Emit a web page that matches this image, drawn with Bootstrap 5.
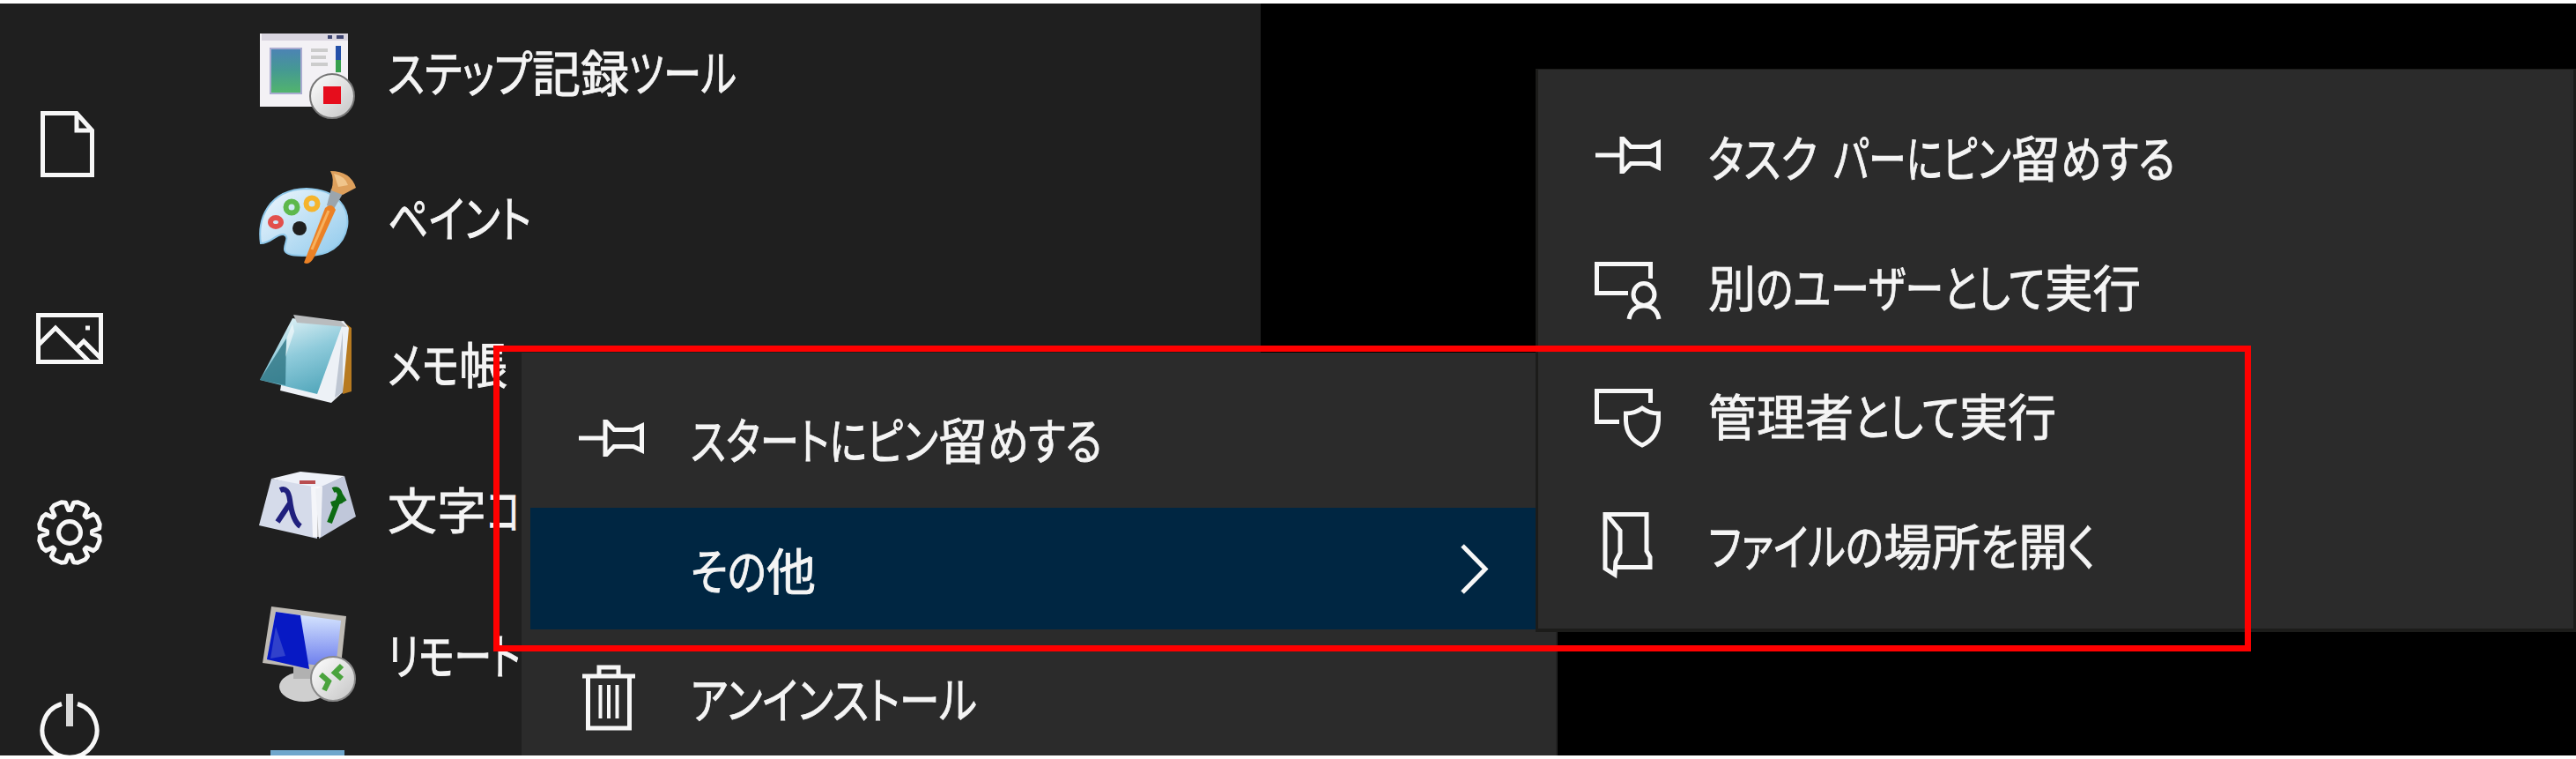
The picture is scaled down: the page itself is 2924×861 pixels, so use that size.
<!DOCTYPE html>
<html lang="ja">
<head>
<meta charset="utf-8">
<title>スタート メニュー</title>
<link href="https://cdn.jsdelivr.net/npm/bootstrap@5.3.0/dist/css/bootstrap.min.css" rel="stylesheet">
<style>
body{margin:0;background:#fff;overflow:hidden;font-family:"Noto Sans CJK JP","Noto Sans",sans-serif}
.screen{height:861px;padding:4px 0;background:#fff}
.desktop{height:853px;background:#000}
.start-panel{width:1431px;background:#1f1f1f}
.rail{width:288px;padding-top:50px}
.rail svg{width:120px;height:220px;margin-left:19px;flex:none}
.rail svg,.glyph{fill:none;stroke:#f7f7f7;stroke-width:5}
.app-row{height:165.3px;flex:none}
.apps{margin-top:-3.5px}
.app-icon{width:120px;height:120px;margin-right:32px;flex:none}
.label-text{font-size:56px;line-height:70px;height:70px;color:#f4f4f4;-webkit-text-stroke:.9px #f4f4f4;white-space:pre;font-feature-settings:"palt";margin-top:-6px;display:block}
.label-text b{font-weight:400;display:inline-block;transform-origin:0 50%}
.flyout{background:#2b2b2b;z-index:2}
.context{left:592px;top:396px;width:1176px;height:457px;padding:26px 0 0 10px;overflow:hidden;border-right:2px solid #222}
.context .r1{height:150px}
.context .r1 .label-text{margin-top:-8px}
.context .r2{height:138px;background:#002642;padding-top:5px}
.context .r3{height:160px}
.submenu{left:1743px;top:74px;width:1181px;height:639px;padding-top:27.6px;border:2px solid #1c1c1a;border-width:1px 3px 4px 3px;z-index:3}
.submenu .item{height:146.7px}
.glyph{width:90px;height:100px;flex:none}
.context .glyph{margin-left:48px;margin-right:44px}
.context .glyph.chev{margin:0 32px 0 auto}
.submenu .glyph{margin-left:58px;margin-right:45px}
.marker{left:560px;top:388px;width:1995px;height:347px;border:7px solid #f00;z-index:5}
</style>
<script src="https://cdn.jsdelivr.net/npm/bootstrap@5.3.0/dist/js/bootstrap.bundle.min.js"></script>
</head>
<body>
<div class="screen">
<main class="desktop position-relative overflow-hidden">
  <section class="start-panel d-flex h-100 overflow-hidden">
    <nav class="rail d-flex flex-column">
      <svg viewBox="19 54 120 220"><path d="M48.500 128.500H87L104.500 148V198.500H48.500ZM87 128.500V148H104.500"/></svg>
      <svg viewBox="19 274 120 220"><path d="M43.500 357.500H114.500V410.500H43.500ZM44 391L63 372L101 410M86 396L95 387L114 406"/><path d="M97 372h5" /></svg>
      <svg viewBox="19 494 120 220"><path id="gear" stroke-linejoin="round"/><circle cx="79" cy="604" r="12.500"/></svg>
      <svg viewBox="19 714 120 220"><path stroke-width="8" stroke="#d8d8d8" d="M79 787V824"/><path d="M70 798.500A31 31 0 1 0 88 798.500"/></svg>
    </nav>
    <div class="apps d-flex flex-column">
      <div class="app-row d-flex align-items-center">
        <svg class="app-icon" viewBox="288 23 120 120">
          <defs><linearGradient id="scr" x2="0" y2="1"><stop stop-color="#4c83b5"/><stop offset=".5" stop-color="#459a91"/><stop offset="1" stop-color="#52b56b"/></linearGradient>
          <linearGradient id="ball" x2="1" y2="1"><stop stop-color="#fff"/><stop offset="1" stop-color="#c4c4c4"/></linearGradient></defs>
          <path fill="#f3f1f5" d="M295 38H395V121H295Z"/><path fill="#d9d5df" d="M297 38H395V46H297Z"/>
          <path fill="#3d4470" d="M372 40h5v4h-5zM382 40h8v4h-8z"/>
          <path fill="url(#scr)" stroke="#a9abd0" stroke-width="2" d="M307 55H342V106H307Z"/>
          <path stroke="#ccc" stroke-width="4" d="M353 57H372M353 65H370M353 73H372"/>
          <path fill="#2450a8" d="M381 52h6v16h-6z"/><path fill="#37a04e" d="M381 68h6v14h-6z"/>
          <circle cx="377" cy="109" r="25" fill="url(#ball)" stroke="#777" stroke-width="2"/>
          <path fill="#e60d1c" d="M367 98h20v20h-20z"/>
        </svg>
        <span class="label-text"><b data-w="164">ステップ</b><b data-w="110">記録</b><b data-w="122">ツール</b></span>
      </div>
      <div class="app-row d-flex align-items-center">
        <svg class="app-icon" viewBox="288 189 120 120">
          <defs><linearGradient id="pal" x2="1" y2="1"><stop stop-color="#f2f8fd"/><stop offset="1" stop-color="#8ec9ec"/></linearGradient></defs>
          <path fill="url(#pal)" stroke="#8fc8ea" stroke-width="2" d="M296 277C292 250 304 216 348 215C384 216 397 238 394 258C390 281 372 291 349 291C336 291 322 291 323 283C323 276 329 270 322 267C313 266 308 277 296 277Z"/>
          <circle cx="340" cy="260" r="8" fill="#1f1f1f"/>
          <g fill="none" stroke-width="6"><ellipse cx="313" cy="253" rx="6" ry="5" stroke="#e2504c"/><circle cx="331" cy="236" r="6.500" stroke="#5db84c"/><circle cx="354" cy="232" r="6.500" stroke="#f5b42c"/></g>
          <path fill="#9ba5ad" d="M376 215L389 221L379 238L371 234Z"/>
          <path fill="#eb8125" d="M369 237Q376 230 381 239L357 292Q351 303 345 299Z"/><path stroke="#f7b15d" stroke-width="3" d="M373 240L354 284"/>
          <path fill="#dea05c" d="M375 195Q398 195 404 214L389 222L376 217Q380 204 375 195Z"/><path fill="#f0c58c" d="M379 198Q392 201 395 211L384 213Z"/>
        </svg>
        <span class="label-text"><b data-w="163">ペイント</b></span>
      </div>
      <div class="app-row d-flex align-items-center">
        <svg class="app-icon" viewBox="288 354 120 120">
          <defs><linearGradient id="note" x1=".2" x2=".6" y2="1"><stop stop-color="#e4f3f7"/><stop offset=".5" stop-color="#8fcbdb"/><stop offset="1" stop-color="#56a9bd"/></linearGradient></defs>
          <path fill="#b77a20" d="M392 367L399 372V444L389 447Z"/>
          <path fill="#edf1f6" d="M390 364L396 372L389 445L376 457L318 443L331 370Z"/>
          <path fill="#bec6d2" d="M389 376L389 445L380 451Z"/>
          <path fill="url(#note)" d="M332 361L388 370L360 447L295 431Z"/>
          <path fill="#286f7e" opacity=".75" d="M325 384L324 437L295 431Z"/><path fill="#fff" opacity=".55" d="M332 367L326 382L324 405L334 376Z"/>
          <path fill="#b9bcbe" d="M333 357L386 364L394 371L337 366Z"/>
        </svg>
        <span class="label-text"><b data-w="81">メモ</b><b data-w="55">帳</b></span>
      </div>
      <div class="app-row d-flex align-items-center">
        <svg class="app-icon" viewBox="288 519 120 120">
          <path fill="#eef1f8" d="M308 543L341 535L391 540L360 556Z"/><path fill="#d5dbea" d="M308 543L360 553V611L294 596Z"/><path fill="#c0c7da" d="M391 540L404 586L362 611L358 555Z"/>
          <path fill="#fff" opacity=".75" d="M353 552L366 552L364 609L355 609Z"/><path fill="#b94d50" d="M340 545H358V549H340Z"/>
          <path fill="none" stroke="#20207d" stroke-width="6" d="M318 556Q327 552 329 567Q332 591 341 597M329 571L315 592"/>
          <path fill="none" stroke="#0c6b13" stroke-width="6" d="M378 556Q384 553 386 561L391 569M386 562L374 593M376 572L388 568"/>
        </svg>
        <span class="label-text"><b data-w="112">文字</b><b data-w="39">コ</b></span>
      </div>
      <div class="app-row d-flex align-items-center">
        <svg class="app-icon" viewBox="288 684 120 120">
          <defs><linearGradient id="mon" x2="0" y2="1"><stop stop-color="#dbeaff"/><stop offset="1" stop-color="#6a7bed"/></linearGradient></defs>
          <ellipse cx="345" cy="779" rx="28" ry="17" fill="#cfcfcf"/><path fill="#b1b1b1" d="M333 756h22v14h-22z"/>
          <path fill="#bebab4" d="M308 688L393 699L386 764L298 752Z"/><path fill="url(#mon)" d="M313 694L387 704L381 757L303 748Z"/><path fill="#0719c4" d="M313 694L341 698L351 759L303 748Z"/><path fill="#4152cf" opacity=".7" d="M313 711L324 744L307 747Z"/>
          <circle cx="378" cy="770" r="25" fill="url(#ball)" stroke="#888" stroke-width="2"/>
          <path fill="none" stroke="#4aa33d" stroke-width="6" d="M364 765L373 773L368 783M388 755L380 763L388 770"/>
        </svg>
        <span class="label-text"><b data-w="151">リモート</b></span>
      </div>
      <div class="app-row d-flex align-items-start">
        <svg class="app-icon" viewBox="288 827 120 120"><path fill="#6fa6cc" d="M307 851H391V900H307Z"/></svg>
      </div>
    </div>
  </section>

  <section class="flyout context position-absolute">
    <div class="r1 d-flex align-items-center">
      <svg class="glyph" viewBox="1804 129 90 100"><path d="M1811 175H1841M1841 154V196M1842 156L1851 165.500H1873L1882.500 161V189L1873 184.500H1851L1842 194"/></svg>
      <span class="label-text"><b data-w="281">スタートにピン</b><b data-w="56">留</b><b data-w="130">めする</b></span>
    </div>
    <div class="r2 d-flex align-items-center">
      <svg class="glyph" viewBox="0 0 90 100"></svg>
      <span class="label-text"><b data-w="86">その</b><b data-w="56">他</b></span>
      <svg class="glyph chev" viewBox="1646 598 90 100"><path d="M1662 619L1688 645.500L1662 672"/></svg>
    </div>
    <div class="r3 d-flex align-items-center">
      <svg class="glyph" viewBox="650 744 90 100"><path d="M661 767H721M680 767V757H702V767M667.500 767V826H714.500V767"/><path stroke-width="4" d="M681.500 777V815M691 777V815M700.500 777V815"/></svg>
      <span class="label-text"><b data-w="325">アンインストール</b></span>
    </div>
  </section>

  <section class="flyout submenu position-absolute">
    <div class="item d-flex align-items-center">
      <svg class="glyph" viewBox="1804 129 90 100"><path d="M1811 175H1841M1841 154V196M1842 156L1851 165.500H1873L1882.500 161V189L1873 184.500H1851L1842 194"/></svg>
      <span class="label-text"><b data-w="124">タスク</b><b data-w="18"> </b><b data-w="202">パーにピン</b><b data-w="56">留</b><b data-w="130">めする</b></span>
    </div>
    <div class="item d-flex align-items-center">
      <svg class="glyph" viewBox="1804 276 90 100"><path d="M1873.500 315V298.500H1812.500V331.500H1848"/><ellipse cx="1866" cy="333" rx="12" ry="12.500"/><path d="M1849 361Q1852 346 1866 346Q1880 346 1883 361"/></svg>
      <span class="label-text"><b data-w="54">別</b><b data-w="328">のユーザーとして</b><b data-w="109">実行</b></span>
    </div>
    <div class="item d-flex align-items-center">
      <svg class="glyph" viewBox="1804 424 90 100"><path d="M1873.500 458V444.500H1812.500V479.500H1838"/><path d="M1864 464Q1856 470 1845.500 470V478Q1846 498 1864 506Q1882 498 1882.500 478V470Q1872 470 1864 464Z"/></svg>
      <span class="label-text"><b data-w="165">管理者</b><b data-w="120">として</b><b data-w="110">実行</b></span>
    </div>
    <div class="item d-flex align-items-center">
      <svg class="glyph" viewBox="1804 570 90 100"><path d="M1836 643.500H1873V632L1869 625V583.500H1822V645L1833 652L1834 637L1839 627V602L1824 584"/></svg>
      <span class="label-text"><b data-w="199">ファイルの</b><b data-w="110">場所</b><b data-w="43">を</b><b data-w="56">開</b><b data-w="32">く</b></span>
    </div>
  </section>
  <div class="marker position-absolute"></div>
</main>
</div>
<script>
// Condense each run of glyphs to its UI-font advance width.
document.querySelectorAll('[data-w]').forEach(function (el) {
  var want = +el.dataset.w, have = el.getBoundingClientRect().width;
  el.style.transform = 'scaleX(' + want / have + ')';
  el.style.marginRight = (want - have) + 'px';
});
// Eight-tooth gear outline.
var pts = [], n = 8;
for (var i = 0; i < n; i++) {
  [[-0.43, 25.5], [-0.33, 34], [-0.16, 35.5], [0.16, 35.5], [0.33, 34], [0.43, 25.5]].forEach(function (p) {
    var a = (i + 0.5 + p[0]) * 2 * Math.PI / n - Math.PI / 2;
    pts.push((79 + p[1] * Math.cos(a)).toFixed(1) + ' ' + (604 + p[1] * Math.sin(a)).toFixed(1));
  });
}
document.getElementById('gear').setAttribute('d', 'M' + pts.join('L') + 'Z');
</script>
</body>
</html>
